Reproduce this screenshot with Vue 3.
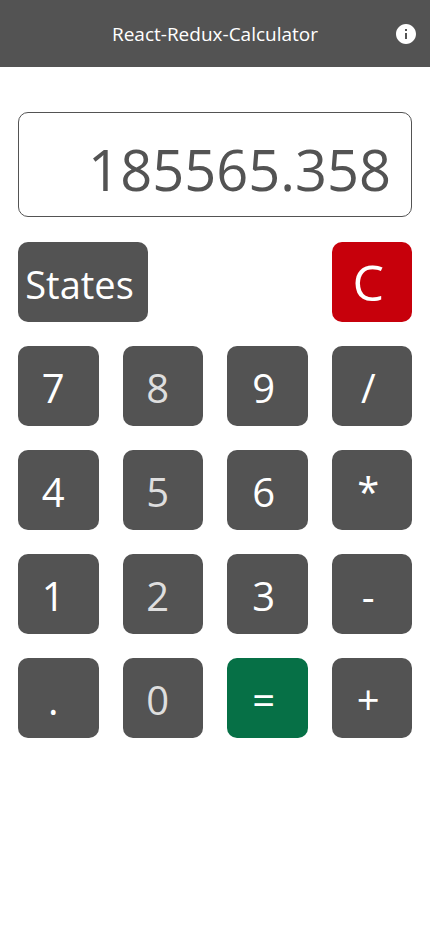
<script setup>
import { ref } from 'vue'

const display = ref('185565.358')
const operand = ref(null)
const operator = ref('')
const fresh = ref(true)
const history = ref([])

const keys = [
  { label: '7' },
  { label: '8', soft: true },
  { label: '9', right: true },
  { label: '/', right: true },
  { label: '4' },
  { label: '5', soft: true },
  { label: '6', right: true },
  { label: '*', right: true },
  { label: '1' },
  { label: '2', soft: true },
  { label: '3', right: true },
  { label: '-', right: true },
  { label: '.' },
  { label: '0', soft: true },
  { label: '=', right: true, equals: true },
  { label: '+', right: true },
]

const operations = {
  '+': (a, b) => a + b,
  '-': (a, b) => a - b,
  '*': (a, b) => a * b,
  '/': (a, b) => a / b,
}

function clear() {
  display.value = '0'
  operand.value = null
  operator.value = ''
  fresh.value = true
}

function evaluate() {
  if (!operator.value) return
  const result = operations[operator.value](operand.value, Number(display.value))
  display.value = String(Number(result.toPrecision(9)))
  history.value.push(display.value)
  operator.value = ''
}

function recall() {
  if (history.value.length) {
    display.value = history.value.pop()
    fresh.value = true
  }
}

function press(label) {
  if (label === '=') {
    evaluate()
    fresh.value = true
  } else if (operations[label]) {
    if (!fresh.value) evaluate()
    operand.value = Number(display.value)
    operator.value = label
    fresh.value = true
  } else if (label === '.') {
    if (fresh.value) display.value = '0.'
    else if (!display.value.includes('.')) display.value += '.'
    fresh.value = false
  } else {
    display.value = fresh.value || display.value === '0' ? label : display.value + label
    fresh.value = false
  }
}
</script>

<template>
  <div class="app">
    <header class="bar">
      <h1 class="title">React-Redux-Calculator</h1>
      <button class="info" type="button" aria-label="About">
        <svg viewBox="0 0 24 24" width="24" height="24" aria-hidden="true">
          <path
            fill="currentColor"
            d="M12 2C6.48 2 2 6.48 2 12s4.480 10 10 10 10-4.480 10-10S17.520 2 12 2zm1 15h-2v-6h2v6zm0-8h-2V7h2v2z"
          />
        </svg>
      </button>
    </header>
    <main class="calculator">
      <output class="display">{{ display }}</output>
      <div class="pad">
        <button class="key right states" type="button" @click="recall">States</button>
        <button class="key right clear" type="button" @click="clear">C</button>
        <button
          v-for="key in keys"
          :key="key.label"
          class="key"
          :class="{ soft: key.soft, right: key.right, equals: key.equals }"
          type="button"
          @click="press(key.label)"
        >
          {{ key.label }}
        </button>
      </div>
    </main>
  </div>
</template>

<style>
body {
  background: #fff;
}
</style>

<style scoped>
.app {
  font-family: "Segoe UI", "Open Sans", "Noto Sans", sans-serif;
  color: #535353;
}

.bar {
  display: grid;
  grid-template-columns: 24px 1fr 24px;
  align-items: center;
  height: 67px;
  padding: 0 12px;
  background: #535353;
  color: #fff;
}

.title {
  grid-column: 2;
  margin: 0;
  font-size: 19px;
  line-height: 24px;
  font-weight: 400;
  text-align: center;
}

.info {
  display: flex;
  padding: 0;
  border: 0;
  background: none;
  color: inherit;
  cursor: pointer;
}

.calculator {
  display: flex;
  flex-direction: column;
  gap: 25px;
  padding: 45px 18px;
}

.display {
  display: block;
  padding: 16px 20px 7px;
  border: 1px solid #535353;
  border-radius: 10px;
  font-size: 56px;
  line-height: 80px;
  text-align: right;
}

.pad {
  display: grid;
  grid-template-columns: repeat(4, 1fr);
  grid-auto-rows: 80px;
  gap: 24px;
}

.key {
  padding: 4px 10px 0 0;
  border: 0;
  border-radius: 10px;
  background: #535353;
  color: #fff;
  font-family: inherit;
  font-size: 40px;
  line-height: 56px;
  text-align: center;
  cursor: pointer;
}

.right {
  padding-right: 7px;
}

.soft {
  color: #dedede;
}

.states {
  grid-column: 1 / span 2;
  justify-self: start;
  width: 130px;
  font-size: 38px;
}

.clear {
  grid-column: 4;
  padding-top: 0;
  background: #c7000b;
  font-size: 50px;
}

.equals {
  background: #067046;
}
</style>
